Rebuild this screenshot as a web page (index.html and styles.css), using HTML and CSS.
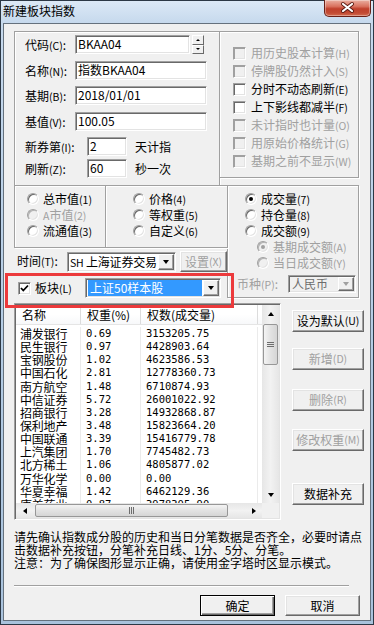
FILE: index.html
```html
<!DOCTYPE html>
<html lang="zh-CN">
<head>
    <meta charset="UTF-8">
    <meta name="viewport" content="width=device-width, initial-scale=1.0">
    <title>新建板块指数</title>
    <link rel="stylesheet" href="styles.css">
</head>
<body>
<div class="window">
    <div class="titlebar">
        <span class="title">新建板块指数</span>
        <span class="close-btn">
            <svg width="45" height="16" viewBox="0 0 45 16">
                <path d="M18 4 L27 11 M27 4 L18 11" stroke="#5a1a12" stroke-width="4" stroke-linecap="round"/>
                <path d="M18 4 L27 11 M27 4 L18 11" stroke="#fff" stroke-width="2.2" stroke-linecap="round"/>
            </svg>
        </span>
    </div>

    <div class="client">
        <div class="row-top">
            <div class="group basic">
                <div class="field">
                    <span class="lbl">代码<span class="k">(C)</span>:</span>
                    <span class="edit w-code">BKAA04</span>
                    <span class="spin">
                        <span class="spin-btn"><span class="tri-up small"></span></span>
                        <span class="spin-btn"><span class="tri-down small"></span></span>
                    </span>
                </div>
                <div class="field">
                    <span class="lbl">名称<span class="k">(N)</span>:</span>
                    <span class="edit w-long">指数BKAA04</span>
                </div>
                <div class="field">
                    <span class="lbl">基期<span class="k">(B)</span>:</span>
                    <span class="edit w-long">2018/01/01</span>
                </div>
                <div class="field">
                    <span class="lbl">基值<span class="k">(V)</span>:</span>
                    <span class="edit w-long">100.05</span>
                </div>
                <div class="field short">
                    <span class="lbl">新券第<span class="k">(I)</span>:</span>
                    <span class="edit w-short">2</span>
                    <span class="unit">天计指</span>
                </div>
                <div class="field short">
                    <span class="lbl">刷新<span class="k">(Z)</span>:</span>
                    <span class="edit w-short">60</span>
                    <span class="unit">秒一次</span>
                </div>
            </div>

            <div class="group options">
                <div class="check-row off"><span class="checkbox"></span><span>用历史股本计算<span class="k">(H)</span></span></div>
                <div class="check-row off"><span class="checkbox"></span><span>停牌股仍然计入<span class="k">(S)</span></span></div>
                <div class="check-row"><span class="checkbox"></span><span>分时不动态刷新<span class="k">(E)</span></span></div>
                <div class="check-row"><span class="checkbox"></span><span>上下影线都减半<span class="k">(F)</span></span></div>
                <div class="check-row off"><span class="checkbox"></span><span>未计指时也计量<span class="k">(O)</span></span></div>
                <div class="check-row off"><span class="checkbox"></span><span>用原始价格统计<span class="k">(G)</span></span></div>
                <div class="check-row off"><span class="checkbox"></span><span>基期之前不显示<span class="k">(W)</span></span></div>
            </div>
        </div>

        <div class="row-mid">
            <div class="col-left">
                <div class="weight-boxes">
                    <div class="group wbox1">
                        <div class="radio-row"><span class="radio"></span><span>总市值<span class="k">(1)</span></span></div>
                        <div class="radio-row off"><span class="radio"></span><span><span class="k">A</span>市值<span class="k">(2)</span></span></div>
                        <div class="radio-row"><span class="radio"></span><span>流通值<span class="k">(3)</span></span></div>
                    </div>
                    <div class="group wbox2">
                        <div class="radio-row"><span class="radio"></span><span>价格<span class="k">(4)</span></span></div>
                        <div class="radio-row"><span class="radio"></span><span>等权重<span class="k">(5)</span></span></div>
                        <div class="radio-row"><span class="radio"></span><span>自定义<span class="k">(6)</span></span></div>
                    </div>
                </div>

                <div class="time-row">
                    <span class="lbl-time">时间<span class="k">(T)</span>:</span>
                    <span class="combo w-time">
                        <span class="combo-text tight"><span class="k">SH</span> 上海证券交易</span>
                        <span class="combo-arrow"><span class="tri-down"></span></span>
                    </span>
                    <span class="btn btn-set off">设置<span class="k">(X)</span></span>
                </div>

                <div class="block-row">
                    <span class="checkbox checked">
                        <svg width="11" height="11" viewBox="0 0 11 11"><path d="M2 5 L4.3 7.5 L9 2.5" fill="none" stroke="#000" stroke-width="1.8"/></svg>
                    </span>
                    <span class="lbl-block">板块<span class="k">(L)</span></span>
                    <span class="combo w-block">
                        <span class="combo-text selected">上证50样本股</span>
                        <span class="combo-arrow"><span class="tri-down"></span></span>
                    </span>
                </div>

                <div class="highlight-mark"></div>
            </div>

            <div class="group wbox3">
                <div class="radio-row"><span class="radio checked"></span><span>成交量<span class="k">(7)</span></span></div>
                <div class="radio-row"><span class="radio"></span><span>持仓量<span class="k">(8)</span></span></div>
                <div class="radio-row"><span class="radio"></span><span>成交额<span class="k">(9)</span></span></div>
                <div class="radio-row sub off"><span class="radio checked"></span><span>基期成交额<span class="k">(A)</span></span></div>
                <div class="radio-row sub off"><span class="radio"></span><span>当日成交额<span class="k">(Y)</span></span></div>
                <div class="currency-row">
                    <span class="lbl-cur off">币种<span class="k">(P)</span>:</span>
                    <span class="combo w-cur disabled">
                        <span class="combo-text">人民币</span>
                        <span class="combo-arrow"><span class="tri-down gray"></span></span>
                    </span>
                </div>
            </div>
        </div>

        <div class="row-list">
            <div class="listview">
                <div class="lv-main">
                    <div class="lv-table">
                        <div class="lv-head">
                            <span class="c-name">名称</span>
                            <span class="c-weight">权重(%)</span>
                            <span class="c-amount">权数(成交量)</span>
                            <span class="c-extra">股本</span>
                        </div>
                        <div class="lv-body">
                            <div class="lv-row"><span class="c-name">浦发银行</span><span class="c-weight num">0.69</span><span class="c-amount num">3153205.75</span><span class="c-extra num">2</span></div>
                            <div class="lv-row"><span class="c-name">民生银行</span><span class="c-weight num">0.97</span><span class="c-amount num">4428903.64</span><span class="c-extra num">5</span></div>
                            <div class="lv-row"><span class="c-name">宝钢股份</span><span class="c-weight num">1.02</span><span class="c-amount num">4623586.53</span><span class="c-extra num">5</span></div>
                            <div class="lv-row"><span class="c-name">中国石化</span><span class="c-weight num">2.81</span><span class="c-amount num">12778360.73</span><span class="c-extra num">1</span></div>
                            <div class="lv-row"><span class="c-name">南方航空</span><span class="c-weight num">1.48</span><span class="c-amount num">6710874.93</span><span class="c-extra num">6</span></div>
                            <div class="lv-row"><span class="c-name">中信证券</span><span class="c-weight num">5.72</span><span class="c-amount num">26001022.92</span><span class="c-extra num">1</span></div>
                            <div class="lv-row"><span class="c-name">招商银行</span><span class="c-weight num">3.28</span><span class="c-amount num">14932868.87</span><span class="c-extra num">5</span></div>
                            <div class="lv-row"><span class="c-name">保利地产</span><span class="c-weight num">3.48</span><span class="c-amount num">15823664.20</span><span class="c-extra num">1</span></div>
                            <div class="lv-row"><span class="c-name">中国联通</span><span class="c-weight num">3.39</span><span class="c-amount num">15416779.78</span><span class="c-extra num">2</span></div>
                            <div class="lv-row"><span class="c-name">上汽集团</span><span class="c-weight num">1.70</span><span class="c-amount num">7745482.73</span><span class="c-extra num">2</span></div>
                            <div class="lv-row"><span class="c-name">北方稀土</span><span class="c-weight num">1.06</span><span class="c-amount num">4805877.02</span><span class="c-extra num">3</span></div>
                            <div class="lv-row"><span class="c-name">万华化学</span><span class="c-weight num">0.00</span><span class="c-amount num">0.00</span><span class="c-extra num">0</span></div>
                            <div class="lv-row"><span class="c-name">华夏幸福</span><span class="c-weight num">1.42</span><span class="c-amount num">6462129.36</span><span class="c-extra num">2</span></div>
                            <div class="lv-row"><span class="c-name">康美药业</span><span class="c-weight num">0.87</span><span class="c-amount num">3978305.90</span><span class="c-extra num">1</span></div>
                        </div>
                    </div>
                    <div class="vscroll">
                        <span class="sb-btn"><span class="tri-up"></span></span>
                        <span class="sb-thumb-v"><span class="grip-v"></span></span>
                        <span class="sb-track"></span>
                        <span class="sb-btn"><span class="tri-down"></span></span>
                    </div>
                </div>
                <div class="lv-bottom">
                    <div class="hscroll">
                        <span class="sb-btn-h"><span class="tri-left"></span></span>
                        <span class="sb-thumb-h"><span class="grip-h"></span></span>
                        <span class="sb-track"></span>
                        <span class="sb-btn-h"><span class="tri-right"></span></span>
                    </div>
                    <div class="corner"></div>
                </div>
            </div>

            <div class="side-buttons">
                <span class="btn b-default">设为默认<span class="k">(U)</span></span>
                <span class="btn b-add off">新增<span class="k">(D)</span></span>
                <span class="btn b-del off">删除<span class="k">(R)</span></span>
                <span class="btn b-edit off">修改权重<span class="k">(M)</span></span>
                <span class="btn b-fill">数据补充</span>
            </div>
        </div>

        <p class="note">请先确认指数成分股的历史和当日分笔数据是否齐全，必要时请点<br>击数据补充按钮，分笔补充日线、1分、5分、分笔。<br>注意：为了确保图形显示正确，请使用金字塔时区显示模式。</p>

        <div class="separator"></div>

        <div class="dialog-buttons">
            <span class="btn btn-main">确定</span>
            <span class="btn btn-cancel">取消</span>
        </div>
    </div>
</div>
</body>
</html>
```

FILE: styles.css
```css
* {
    box-sizing: border-box;
}

body {
    margin: 0;
    width: 374px;
    height: 625px;
    overflow: hidden;
    font-family: "Noto Sans CJK SC", sans-serif;
    font-size: 12px;
    color: #000;
    background: #7890a8;
}

.window {
    width: 374px;
    height: 625px;
    border: 1px solid #2c3845;
    padding: 0 2px 3px 2px;
    background: linear-gradient(180deg, #dce9f6 0, #c6d9ed 22px, #b3cbe3 60%, #a9c2dc 100%);
    display: flex;
    flex-direction: column;
}

.titlebar {
    height: 22px;
    display: flex;
    align-items: flex-start;
    flex-shrink: 0;
}

.title {
    margin-top: 2px;
    line-height: 16px;
}

.close-btn {
    margin-left: auto;
    margin-top: -1px;
    width: 47px;
    height: 17px;
    border: 1px solid #6a2017;
    border-top: none;
    border-radius: 0 0 5px 5px;
    background: linear-gradient(180deg, #eab0a2 0, #d9725f 40%, #c0402c 55%, #c24a33 80%, #d36b4f 100%);
    box-shadow: inset 0 0 0 1px rgba(255, 255, 255, 0.35);
    display: flex;
    align-items: center;
    justify-content: center;
}

.client {
    flex: 1;
    background: #f0f0f0;
    border: 1px solid #65717d;
    padding: 7px 0 0 10px;
    display: flex;
    flex-direction: column;
}

.k {
    font-size: 10.5px;
}

.off {
    color: #a0a0a0;
}

/* group boxes */
.group {
    border: 1px solid #a0a0a0;
    box-shadow: inset 1px 1px 0 #fff, 1px 1px 0 #fff;
}

.row-top {
    display: flex;
    height: 155px;
    flex-shrink: 0;
}

.basic {
    width: 206px;
    height: 155px;
    padding: 3px 0 0 10px;
}

.options {
    width: 140px;
    height: 147px;
    margin-left: -1px;
    padding: 12px 0 0 13px;
}

/* edit fields */
.field {
    display: flex;
    align-items: center;
    height: 19px;
    white-space: nowrap;
}

.field + .field {
    margin-top: 6.5px;
}

.field.short + .field.short {
    margin-top: 3px;
}

.lbl {
    width: 50px;
}

.field.short .lbl {
    width: 62px;
}

.edit {
    height: 19px;
    line-height: 16px;
    padding-left: 2px;
    background: #fff;
    border: 1px solid;
    border-color: #a0a0a0 #fff #fff #a0a0a0;
    box-shadow: inset 1px 1px 0 #696969, inset -1px -1px 0 #e3e3e3;
}

.w-code {
    width: 115px;
}

.w-long {
    width: 132px;
}

.w-short {
    width: 40px;
}

.unit {
    margin-left: 8px;
}

.spin {
    margin-left: 2px;
    width: 12px;
    height: 19px;
    display: flex;
    flex-direction: column;
}

.spin-btn {
    height: 9.5px;
    background: #f0f0f0;
    border: 1px solid;
    border-color: #fff #696969 #696969 #fff;
    display: flex;
    align-items: center;
    justify-content: center;
}

/* arrows */
.tri-down,
.tri-up,
.tri-left,
.tri-right {
    width: 0;
    height: 0;
    border-style: solid;
}

.tri-down {
    border-width: 4px 3.5px 0 3.5px;
    border-color: #000 transparent transparent transparent;
}

.tri-up {
    border-width: 0 3.5px 4px 3.5px;
    border-color: transparent transparent #000 transparent;
}

.tri-left {
    border-width: 3.5px 4px 3.5px 0;
    border-color: transparent #000 transparent transparent;
}

.tri-right {
    border-width: 3.5px 0 3.5px 4px;
    border-color: transparent transparent transparent #000;
}

.tri-up.small {
    border-width: 0 2px 2px 2px;
}

.tri-down.small {
    border-width: 2px 2px 0 2px;
}

.tri-down.gray {
    border-top-color: #a0a0a0;
}

/* check boxes and radios */
.check-row {
    display: flex;
    align-items: center;
    gap: 5px;
    height: 18px;
    line-height: 16px;
    white-space: nowrap;
}

.checkbox {
    width: 13px;
    height: 13px;
    flex-shrink: 0;
    background: #fff;
    border: 1px solid;
    border-color: #a0a0a0 #fff #fff #a0a0a0;
    box-shadow: inset 1px 1px 0 #696969, inset -1px -1px 0 #e3e3e3;
    display: flex;
    align-items: center;
    justify-content: center;
}

.check-row.off .checkbox {
    background: #f0f0f0;
    box-shadow: inset 1px 1px 0 #a0a0a0, inset -1px -1px 0 #e3e3e3;
}

.radio-row {
    display: flex;
    align-items: center;
    gap: 4px;
    height: 16px;
    line-height: 16px;
    white-space: nowrap;
}

.radio-row.sub {
    margin-left: 12px;
}

.radio {
    position: relative;
    width: 12px;
    height: 12px;
    flex-shrink: 0;
    border-radius: 50%;
    background: #fff;
    border: 1px solid;
    border-color: #a0a0a0 #fff #fff #a0a0a0;
    box-shadow: inset 1px 1px 0 #696969, inset -1px -1px 0 #e3e3e3;
}

.radio-row.off .radio {
    background: #f0f0f0;
    box-shadow: inset 1px 1px 0 #b4b4b4, inset -1px -1px 0 #e3e3e3;
}

.radio.checked::after {
    content: "";
    position: absolute;
    left: 3px;
    top: 3px;
    width: 4px;
    height: 4px;
    border-radius: 50%;
    background: #000;
}

.radio-row.off .radio.checked::after {
    background: #a0a0a0;
}

/* weight method row */
.row-mid {
    display: flex;
    margin-top: -1px;
    flex-shrink: 0;
}

.col-left {
    position: relative;
    width: 214px;
}

.weight-boxes {
    display: flex;
    height: 63px;
}

.wbox1 {
    width: 92px;
    padding: 5px 0 0 12px;
}

.wbox2 {
    width: 123px;
    margin-left: -1px;
    padding: 5px 0 0 27px;
}

.wbox3 {
    width: 132px;
    height: 113px;
    margin-left: -1px;
    padding: 5px 0 0 17px;
}

.currency-row {
    display: flex;
    align-items: center;
    margin-top: 4px;
    margin-left: -8px;
    height: 18px;
}

.lbl-cur {
    width: 51px;
    line-height: 16px;
    white-space: nowrap;
}

.combo.w-cur {
    width: 68px;
    height: 18px;
}

.w-cur .combo-text {
    line-height: 14px;
}

/* combo boxes */
.combo {
    display: flex;
    align-items: stretch;
    height: 20px;
    background: #fff;
    border: 1px solid;
    border-color: #a0a0a0 #fff #fff #a0a0a0;
    box-shadow: inset 1px 1px 0 #696969, inset -1px -1px 0 #e3e3e3;
    padding: 1px;
}

.combo.disabled {
    background: #f0f0f0;
    color: #6d6d6d;
}

.combo-text {
    flex: 1;
    padding-left: 2px;
    line-height: 16px;
    white-space: nowrap;
    overflow: hidden;
}

.combo-text.tight {
    padding-left: 1px;
    letter-spacing: -0.2px;
}

.combo-text.selected {
    background: #3399ff;
    color: #fff;
    margin: 0 1px 0 1px;
}

.combo-arrow {
    width: 16px;
    background: #f0f0f0;
    border: 1px solid;
    border-color: #fff #696969 #696969 #fff;
    box-shadow: inset -1px -1px 0 #a0a0a0;
    display: flex;
    align-items: center;
    justify-content: center;
}

.time-row {
    display: flex;
    align-items: center;
    height: 21px;
    margin-top: 3px;
}

.lbl-time {
    width: 50px;
    margin-left: 3px;
    line-height: 16px;
    white-space: nowrap;
}

.w-time {
    width: 109px;
}

.btn.btn-set {
    margin-left: 4px;
    width: 47px;
    height: 21px;
}

.block-row {
    display: flex;
    align-items: center;
    height: 20px;
    margin-top: 6px;
}

.block-row .checkbox {
    margin-left: 4px;
}

.lbl-block {
    width: 50px;
    margin-left: 4px;
    line-height: 16px;
    white-space: nowrap;
}

.w-block {
    width: 136px;
}

/* red annotation frame */
.highlight-mark {
    position: absolute;
    left: -9px;
    top: 88px;
    width: 229px;
    height: 35px;
    border: 3px solid #ec3a3c;
    z-index: 2;
}

/* list */
.row-list {
    display: flex;
    margin-top: 5px;
    flex-shrink: 0;
}

.listview {
    width: 267px;
    height: 217px;
    padding: 1px;
    background: #fff;
    border: 1px solid;
    border-color: #a0a0a0 #fff #fff #a0a0a0;
    box-shadow: inset 1px 1px 0 #696969, inset -1px -1px 0 #e3e3e3;
    display: flex;
    flex-direction: column;
}

.lv-main {
    display: flex;
    height: 198px;
}

.lv-table {
    width: 246px;
    overflow: hidden;
    background: #fff;
}

.lv-head {
    display: flex;
    height: 20px;
    line-height: 19px;
    border-bottom: 1px solid #e5e5e5;
    background: linear-gradient(180deg, #fff 0, #fff 50%, #f7f8fa 100%);
    white-space: nowrap;
}

.lv-head span {
    border-right: 1px solid #dcdcdc;
    padding-left: 6px;
}

.c-name {
    width: 65px;
    flex-shrink: 0;
}

.c-weight {
    width: 60px;
    flex-shrink: 0;
}

.c-amount {
    width: 117px;
    flex-shrink: 0;
}

.c-extra {
    width: 60px;
    flex-shrink: 0;
}

.lv-body {
    padding-top: 2px;
}

.lv-row {
    display: flex;
    height: 13.15px;
    line-height: 13px;
    white-space: nowrap;
    font-size: 12px;
}

.lv-row span {
    padding-left: 5px;
    border-right: 1px solid #ebebeb;
    overflow: hidden;
}

.lv-row .c-name {
    padding-left: 4px;
    letter-spacing: -0.2px;
}

.num {
    font-family: "DejaVu Sans Mono", monospace;
    font-size: 10.5px;
}

/* scroll bars */
.vscroll {
    width: 17px;
    display: flex;
    flex-direction: column;
    background: linear-gradient(90deg, #e6e6e6, #f2f2f2 50%, #e6e6e6);
}

.sb-btn {
    height: 17px;
    display: flex;
    align-items: center;
    justify-content: center;
}

.sb-track {
    flex: 1;
}

.sb-thumb-v {
    height: 41px;
    margin: 2px 1px 0 1px;
    border: 1px solid #979797;
    border-radius: 2px;
    background: linear-gradient(90deg, #f4f4f4, #e2e2e2 50%, #d5d5d5);
    display: flex;
    align-items: center;
    justify-content: center;
}

.grip-v {
    width: 7px;
    height: 5px;
    border-top: 1px solid #6d6d6d;
    border-bottom: 1px solid #6d6d6d;
    position: relative;
}

.grip-v::after {
    content: "";
    position: absolute;
    left: 0;
    top: 1px;
    width: 7px;
    border-top: 1px solid #6d6d6d;
}

.lv-bottom {
    display: flex;
    height: 15px;
}

.hscroll {
    width: 246px;
    display: flex;
    background: linear-gradient(180deg, #e6e6e6, #f2f2f2 50%, #e6e6e6);
}

.sb-btn-h {
    width: 17px;
    display: flex;
    align-items: center;
    justify-content: center;
}

.sb-thumb-h {
    width: 193px;
    margin: 1px 0 1px 2px;
    border: 1px solid #979797;
    border-radius: 2px;
    background: linear-gradient(180deg, #f4f4f4, #e2e2e2 50%, #d5d5d5);
    display: flex;
    align-items: center;
    justify-content: center;
}

.grip-h {
    width: 5px;
    height: 7px;
    border-left: 1px solid #6d6d6d;
    border-right: 1px solid #6d6d6d;
    position: relative;
}

.grip-h::after {
    content: "";
    position: absolute;
    left: 1px;
    top: 0;
    height: 7px;
    border-left: 1px solid #6d6d6d;
}

.corner {
    width: 17px;
    background: #f0f0f0;
}

/* buttons */
.btn {
    height: 22px;
    line-height: 16px;
    display: flex;
    align-items: center;
    justify-content: center;
    white-space: nowrap;
    background: #f0f0f0;
    border: 1px solid;
    border-color: #fff #696969 #696969 #fff;
    box-shadow: inset -1px -1px 0 #a0a0a0, inset 1px 1px 0 #e3e3e3;
}

.side-buttons {
    margin-left: 11px;
    width: 72px;
    display: flex;
    flex-direction: column;
}

.b-default {
    margin-top: 7px;
}

.b-add {
    margin-top: 16px;
}

.b-del {
    margin-top: 19px;
}

.b-edit {
    margin-top: 18px;
}

.b-fill {
    margin-top: 32px;
}

.note {
    margin: 10px 0 0 0;
    line-height: 13px;
    white-space: nowrap;
}

.separator {
    margin-top: 16px;
    width: 335px;
    height: 2px;
    border-top: 1px solid #a0a0a0;
    border-bottom: 1px solid #fff;
}

.dialog-buttons {
    display: flex;
    justify-content: flex-end;
    gap: 10px;
    margin-top: 8px;
    padding-right: 10px;
}

.dialog-buttons .btn {
    width: 75px;
    height: 21px;
}

.btn-main {
    border-color: #000;
    box-shadow: inset 1px 1px 0 #fff, inset -1px -1px 0 #696969, inset -2px -2px 0 #a0a0a0;
}
```
